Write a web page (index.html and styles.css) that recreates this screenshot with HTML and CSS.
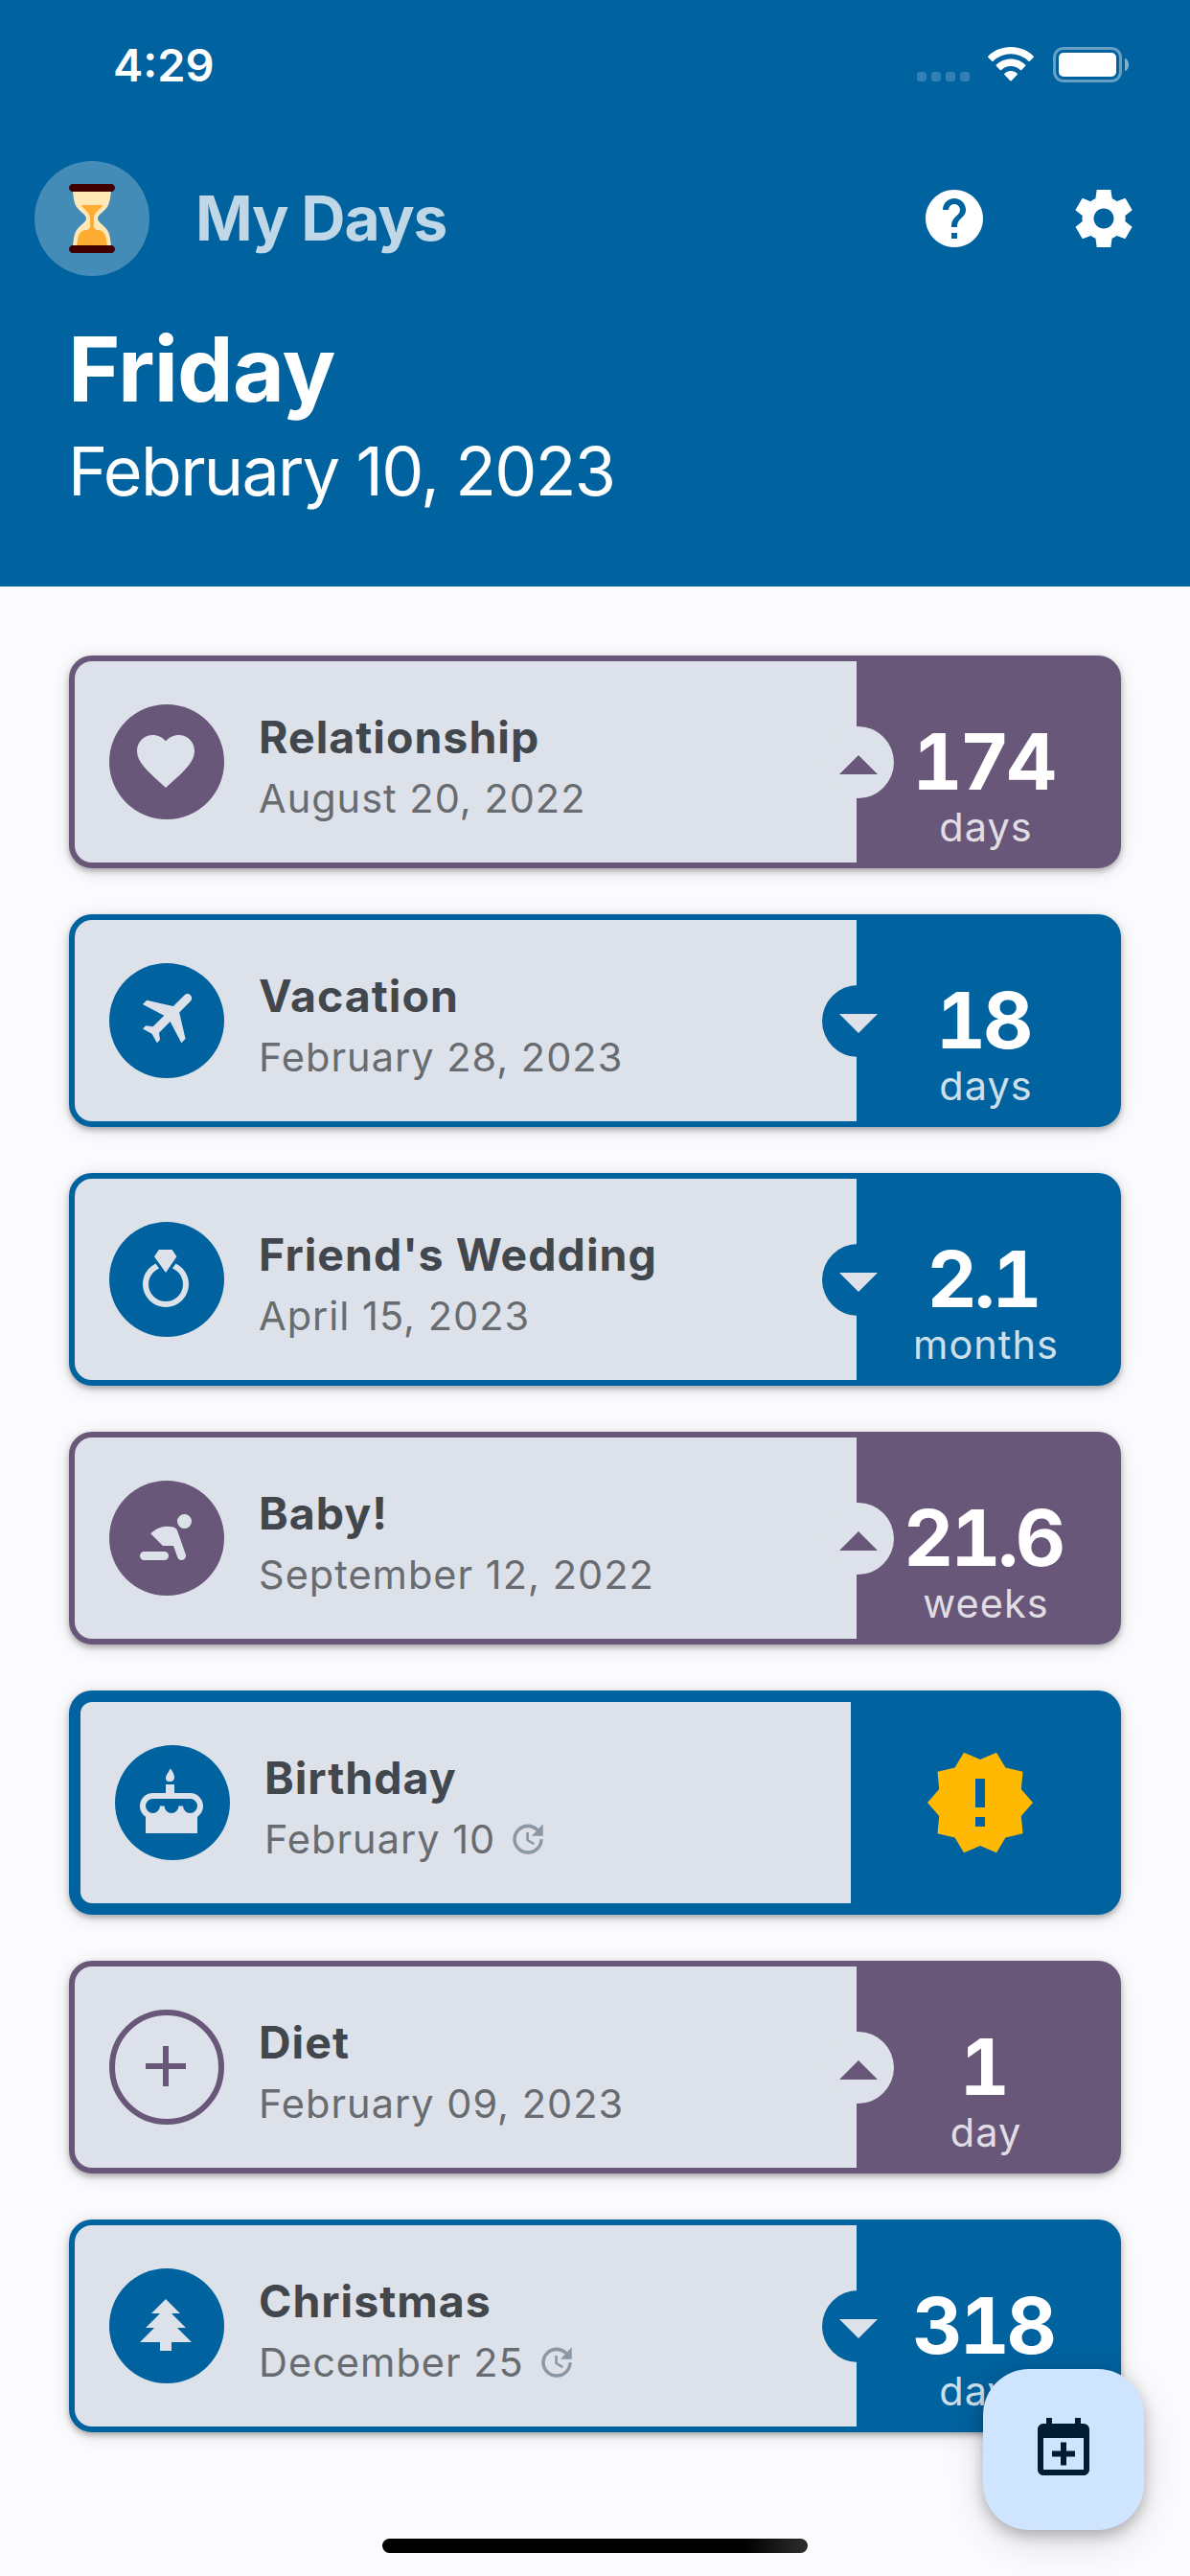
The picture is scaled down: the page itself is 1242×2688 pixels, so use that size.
FILE: index.html
```html
<!DOCTYPE html>
<html lang="en">
<head>
<meta charset="utf-8">
<title>My Days</title>
<link rel="stylesheet" href="styles.css">
</head>
<body>
<svg class="defs" aria-hidden="true">
  <symbol id="update" viewBox="0 0 24 24"><path d="M21,10.12H14.22L16.96,7.3C14.23,4.6 9.81,4.5 7.08,7.2C4.35,9.91 4.35,14.28 7.08,17C9.81,19.7 14.23,19.7 16.96,17C18.32,15.65 19,14.08 19,12.1H21C21,14.08 20.12,16.65 18.36,18.39C14.85,21.87 9.15,21.87 5.64,18.39C2.14,14.92 2.11,9.28 5.62,5.81C9.13,2.34 14.76,2.34 18.27,5.81L21,3V10.12M12.5,8V12.25L16,14.33L15.28,15.54L11,13V8H12.5Z"/></symbol>
  <symbol id="up" viewBox="0 0 40 20"><path d="M0 20L20 0L40 20Z"/></symbol>
  <symbol id="down" viewBox="0 0 40 20"><path d="M0 0H40L20 20Z"/></symbol>
</svg>
<div class="screen">
  <header class="header">
    <div class="status">
      <span class="time">4:29</span>
      <div class="status-icons">
        <div class="dots"><i></i><i></i><i></i><i></i></div>
        <svg class="wifi" viewBox="0 0 48 36"><path d="M24 0C33.2 0 41.600 3.500 47.600 9.400Q48.300 10.200 47.600 10.900L43.800 14.700Q43.100 15.300 42.400 14.700A26.500 26.500 0 0 0 5.600 14.700Q4.900 15.300 4.200 14.700L.4 10.900Q-.3 10.200 .4 9.400C6.400 3.500 14.800 0 24 0ZM24 12.500C29.900 12.500 35.200 14.800 39.100 18.600Q39.800 19.300 39.100 20L35.200 23.900Q34.500 24.500 33.800 23.900A14.200 14.200 0 0 0 14.200 23.900Q13.500 24.500 12.800 23.900L8.900 20Q8.200 19.300 8.900 18.600C12.800 14.800 18.100 12.500 24 12.500ZM24 25C26.500 25 28.800 26 30.600 27.700Q31.200 28.400 30.600 29.100L24.700 35.200Q24 35.900 23.300 35.200L17.400 29.100Q16.800 28.400 17.400 27.700C19.200 26 21.500 25 24 25Z"/></svg>
        <div class="battery"><div class="level"></div></div>
        <div class="nub"></div>
      </div>
    </div>
    <div class="appbar">
      <div class="avatar"><svg viewBox="0 0 36 36"><path fill="#FFE8B6" d="M21 18c0-2.001 3.246-3.369 5-6 2-3 2-10 2-10H8s0 7 2 10c1.754 2.631 5 3.999 5 6s-3.246 3.369-5 6c-2 3-2 10-2 10h20s0-7-2-10c-1.754-2.631-5-3.999-5-6z"/><path fill="#FFAC33" d="M20.999 24c-.999 0-2.057-1-2.057-2C19 20.287 19 19.154 19 18c0-3.22 3.034-4.561 4.9-7H12.1c1.865 2.439 4.9 3.78 4.9 7 0 1.155 0 2.289.058 4 0 1-1.058 2-2.058 2-2 0-3.595 1.784-4 3-1 3-1 7-1 7h16s0-4-1-7c-.405-1.216-2.001-3-4.001-3z"/><path fill="#3E0000" d="M30 34c0 1.104-.896 2-2 2H8c-1.104 0-2-.896-2-2s.896-2 2-2h20c1.104 0 2 .896 2 2zm0-32c0 1.104-.896 2-2 2H8c-1.104 0-2-.896-2-2s.896-2 2-2h20c1.104 0 2 .896 2 2z"/></svg></div>
      <h1 class="app-title">My Days</h1>
      <svg class="action" viewBox="0 0 24 24"><path d="M12 2C6.48 2 2 6.48 2 12s4.48 10 10 10 10-4.48 10-10S17.52 2 12 2zm1 17h-2v-2h2v2zm2.070-7.750l-.9.920C13.450 12.900 13 13.500 13 15h-2v-.5c0-1.100.450-2.100 1.170-2.830l1.240-1.260c.370-.360.590-.860.590-1.410 0-1.100-.9-2-2-2s-2 .9-2 2H8c0-2.210 1.790-4 4-4s4 1.790 4 4c0 .880-.360 1.680-.930 2.250z"/></svg>
      <svg class="action" viewBox="0 0 24 24"><path d="M19.440 12.990l.010-.020c.040-.320.080-.640.080-.980 0-.340-.030-.660-.070-.990l.010.020 2.440-1.920-2.430-4.220-2.870 1.160.010.010c-.520-.4-1.090-.740-1.710-1h.010L14.440 2H9.570l-.440 3.070h.010c-.620.260-1.190.6-1.710 1l.010-.010-2.880-1.170-2.440 4.220 2.440 1.920.010-.020c-.040.330-.070.650-.070.990 0 .340.030.660.080.980l.010.020-2.100 1.650-.330.260 2.430 4.200 2.880-1.150-.020-.040c.530.410 1.100.750 1.730 1.010h-.030L9.580 22h4.850s.030-.180.060-.420l.380-2.650h-.010c.620-.260 1.200-.6 1.730-1.010l-.020.040 2.880 1.150 2.430-4.200s-.140-.120-.330-.260l-2.110-1.660zM12 15.500c-1.930 0-3.500-1.570-3.500-3.500s1.570-3.500 3.500-3.500 3.500 1.570 3.500 3.500-1.570 3.500-3.500 3.500z"/></svg>
    </div>
    <div class="today">
      <div class="weekday">Friday</div>
      <div class="date-today">February 10, 2023</div>
    </div>
  </header>

  <main class="list">
    <article class="card past">
      <div class="info">
        <div class="icon"><svg viewBox="0 0 24 24"><path d="M12 21.350l-1.450-1.320C5.400 15.360 2 12.280 2 8.500 2 5.420 4.420 3 7.500 3c1.740 0 3.410.810 4.500 2.090C13.090 3.810 14.760 3 16.500 3 19.580 3 22 5.420 22 8.500c0 3.780-3.400 6.860-8.550 11.540L12 21.350z"/></svg></div>
        <div class="text"><h2 class="title">Relationship</h2><p class="date">August 20, 2022</p></div>
      </div>
      <div class="count"><div class="knob"><svg><use href="#up"/></svg></div><span class="number">174</span><span class="unit">days</span></div>
    </article>

    <article class="card future">
      <div class="info">
        <div class="icon"><svg viewBox="0 0 24 24"><path transform="translate(1.900 -1.100) rotate(45 12 12)" d="M21,16V14L13,9V3.500A1.500,1.500 0 0,0 11.500,2A1.500,1.500 0 0,0 10,3.500V9L2,14V16L10,13.500V19L8,20.500V22L11.500,21L15,22V20.500L13,19V13.500L21,16Z"/></svg></div>
        <div class="text"><h2 class="title">Vacation</h2><p class="date">February 28, 2023</p></div>
      </div>
      <div class="count"><div class="knob"><svg><use href="#down"/></svg></div><span class="number">18</span><span class="unit">days</span></div>
    </article>

    <article class="card future">
      <div class="info">
        <div class="icon"><svg viewBox="0 0 24 24"><path d="M12,10L8,4.400L9.600,2H14.200L15.800,4.400L12,10M15.500,6.800L14.300,8.500C16.500,9.400 18,11.500 18,14A6,6 0 0,1 12,20A6,6 0 0,1 6,14C6,11.500 7.600,9.400 9.700,8.500L8.500,6.800C5.800,8.100 4,10.800 4,14A8,8 0 0,0 12,22A8,8 0 0,0 20,14C20,10.800 18.200,8.100 15.500,6.800Z"/></svg></div>
        <div class="text"><h2 class="title">Friend's Wedding</h2><p class="date">April 15, 2023</p></div>
      </div>
      <div class="count"><div class="knob"><svg><use href="#down"/></svg></div><span class="number">2.1</span><span class="unit">months</span></div>
    </article>

    <article class="card past">
      <div class="info">
        <div class="icon"><svg viewBox="0 0 24 24"><path d="M18.500,4A2.500,2.500 0 0,1 21,6.500A2.500,2.500 0 0,1 18.500,9A2.500,2.500 0 0,1 16,6.500A2.500,2.500 0 0,1 18.500,4M4.500,20A1.500,1.500 0 0,1 3,18.500A1.500,1.500 0 0,1 4.500,17H11.500A1.500,1.500 0 0,1 13,18.500A1.500,1.500 0 0,1 11.500,20H4.500M16.090,19L14.690,15H11L6.750,10.750C6.750,10.750 9,8.250 12.500,8.250C15.500,8.250 15.850,9.250 16.060,9.870L18.920,18C19.200,18.780 18.780,19.640 18,19.920C17.220,20.190 16.360,19.780 16.090,19Z"/></svg></div>
        <div class="text"><h2 class="title">Baby!</h2><p class="date">September 12, 2022</p></div>
      </div>
      <div class="count"><div class="knob"><svg><use href="#up"/></svg></div><span class="number">21.6</span><span class="unit">weeks</span></div>
    </article>

    <article class="card future is-today">
      <div class="info">
        <div class="icon"><svg viewBox="0 0 24 24"><path d="M11.500,0.500C12,0.750 13,2.400 13,3.500C13,4.600 12.330,5 11.500,5C10.670,5 10,4.850 10,3.750C10,2.650 11,2 11.500,0.500M18.500,9C21,9 23,11 23,13.500C23,15.060 22.210,16.430 21,17.240V23H12L3,23V17.240C1.790,16.430 1,15.060 1,13.500C1,11 3,9 5.500,9H10V6H13V9H18.500M12,16A2.500,2.500 0 0,0 14.500,13.500H16A2.500,2.500 0 0,0 18.500,16A2.500,2.500 0 0,0 21,13.500A2.500,2.500 0 0,0 18.500,11H5.500A2.500,2.500 0 0,0 3,13.500A2.500,2.500 0 0,0 5.500,16A2.500,2.500 0 0,0 8,13.500H9.500A2.500,2.500 0 0,0 12,16Z"/></svg></div>
        <div class="text"><h2 class="title">Birthday</h2><p class="date">February 10<svg class="repeat"><use href="#update"/></svg></p></div>
      </div>
      <div class="count"><svg class="alert" viewBox="0 0 24 24"><path d="M23,12L20.560,9.220L20.900,5.540L17.290,4.720L15.400,1.540L12,3L8.600,1.540L6.710,4.720L3.100,5.530L3.440,9.210L1,12L3.440,14.780L3.100,18.470L6.710,19.290L8.600,22.470L12,21L15.400,22.460L17.290,19.280L20.900,18.460L20.560,14.780L23,12M13,17H11V15H13V17M13,13H11V7H13V13Z"/></svg></div>
    </article>

    <article class="card past">
      <div class="info">
        <div class="icon outlined"><svg viewBox="0 0 24 24"><path d="M19,13H13V19H11V13H5V11H11V5H13V11H19V13Z"/></svg></div>
        <div class="text"><h2 class="title">Diet</h2><p class="date">February 09, 2023</p></div>
      </div>
      <div class="count"><div class="knob"><svg><use href="#up"/></svg></div><span class="number">1</span><span class="unit">day</span></div>
    </article>

    <article class="card future">
      <div class="info">
        <div class="icon"><svg viewBox="0 0 24 24"><path d="M10,21V18H3L8,13H5L10,8H7L12,3L17,8H14L19,13H16L21,18H14V21H10Z"/></svg></div>
        <div class="text"><h2 class="title">Christmas</h2><p class="date">December 25<svg class="repeat"><use href="#update"/></svg></p></div>
      </div>
      <div class="count"><div class="knob"><svg><use href="#down"/></svg></div><span class="number">318</span><span class="unit">days</span></div>
    </article>
  </main>

  <button class="fab" aria-label="Add event"><svg viewBox="0 0 24 24"><path d="M19 19V8H5V19H19M16 1H18V3H19A2 2 0 0 1 21 5V19C21 20.110 20.110 21 19 21H5C3.890 21 3 20.100 3 19V5C3 3.890 3.890 3 5 3H6V1H8V3H16V1M11 9.500H13V12.500H16V14.500H13V17.500H11V14.500H8V12.500H11V9.500Z"/></svg></button>
  <div class="home-indicator"></div>
</div>
</body>
</html>
```
FILE: styles.css
```css
:root {
  --blue: #00629f;
  --purple: #695779;
  --surface: #dde2ea;
  --bg: #fcfcff;
}
* { box-sizing: border-box; }
body {
  margin: 0;
  background: var(--bg);
  font-family: Inter, "Liberation Sans", sans-serif;
}
h1, h2, p { margin: 0; }
svg { display: block; flex: none; }
.defs { width: 0; height: 0; position: absolute; }
.screen {
  position: relative;
  width: 1242px;
  height: 2688px;
  overflow: hidden;
}

/* Header */
.header { height: 612px; background: var(--blue); color: #fff; }
.status {
  height: 144px;
  padding: 44px 64px 0 118px;
  display: flex;
  justify-content: space-between;
  align-items: flex-start;
}
.time { font-size: 47px; line-height: 48px; font-weight: 600; }
.status-icons { display: flex; align-items: flex-start; padding-top: 5px; }
.dots { display: flex; gap: 5px; padding-top: 26px; margin-right: 19px; }
.dots i { width: 10px; height: 10px; border-radius: 3px; background: rgba(255,255,255,.2); }
.wifi { width: 48px; height: 36px; fill: #fff; margin-right: 20px; }
.battery {
  width: 72px;
  height: 37px;
  padding: 3px;
  border: 3px solid rgba(255,255,255,.4);
  border-radius: 11px;
}
.level { height: 25px; border-radius: 5px; background: #fff; }
.nub {
  width: 4px;
  height: 13px;
  margin: 12px 0 0 3px;
  border-radius: 0 4px 4px 0 / 0 6.500px 6.500px 0;
  background: rgba(255,255,255,.5);
}
.appbar {
  height: 168px;
  padding: 0 54px 0 36px;
  display: flex;
  align-items: center;
}
.avatar {
  width: 120px;
  height: 120px;
  border-radius: 50%;
  background: #448cb8;
  display: flex;
  align-items: center;
  justify-content: center;
}
.avatar svg { width: 72px; height: 72px; }
.app-title {
  flex: 1;
  margin-left: 48px;
  font-size: 64px;
  line-height: 76px;
  font-weight: 700;
  letter-spacing: -1.2px;
  color: #bfd7e7;
}
.action { width: 72px; height: 72px; fill: #fff; margin-left: 84px; }
.today { padding: 17px 71px 0; }
.weekday { font-size: 93px; line-height: 112px; font-weight: 700; letter-spacing: -0.8px; }
.date-today { margin-top: 9px; font-size: 70px; line-height: 84px; letter-spacing: -1.7px; }

/* Cards */
.list { display: flex; flex-direction: column; gap: 48px; padding: 72px; }
.card {
  --tone: var(--blue);
  --knob: var(--blue);
  --arrow: var(--surface);
  display: flex;
  border: 6px solid var(--tone);
  border-radius: 24px;
  background: var(--tone);
  box-shadow: 0 3px 6px rgba(0,0,0,.3), 0 3px 24px rgba(0,0,0,.1);
}
.past {
  --tone: var(--purple);
  --knob: var(--surface);
  --arrow: var(--purple);
}
.is-today { border-width: 12px; }
.info {
  flex: 1;
  height: 210px;
  padding-left: 36px;
  display: flex;
  align-items: center;
  gap: 36px;
  border-radius: 18px 0 0 18px;
  background: var(--surface);
}
.is-today .info { border-radius: 12px 0 0 12px; }
.icon {
  width: 120px;
  height: 120px;
  padding: 0 2px 2px 0;
  border-radius: 50%;
  background: var(--tone);
  fill: var(--surface);
  display: flex;
  align-items: center;
  justify-content: center;
}
.icon svg { width: 72px; height: 72px; }
.outlined { border: 6px solid var(--tone); background: none; fill: var(--tone); }
.text { padding-top: 9px; }
.title {
  font-size: 46.500px;
  line-height: 56px;
  font-weight: 700;
  letter-spacing: 1px;
  color: #42474e;
}
.date {
  margin-top: 11px;
  font-size: 41.500px;
  line-height: 50px;
  letter-spacing: 1px;
  color: #686c70;
  display: flex;
  align-items: center;
}
.repeat { width: 42px; height: 42px; margin-left: 13px; fill: #8b97a4; }
.count {
  position: relative;
  width: 270px;
  padding-top: 63px;
  display: flex;
  flex-direction: column;
  align-items: center;
  color: #fff;
}
.is-today .count { padding-top: 0; justify-content: center; }
.alert { width: 120px; height: 120px; fill: #ffb902; }
.number {
  margin-right: 6px;
  font-size: 81px;
  line-height: 84px;
  font-weight: 700;
  font-variant-numeric: tabular-nums;
  letter-spacing: -3.2px;
}
.unit { margin-top: 1px; font-size: 41.500px; line-height: 50px; letter-spacing: 1px; opacity: .8; }
.knob {
  position: absolute;
  left: -36px;
  top: 68px;
  width: 75px;
  height: 75px;
  padding-top: 5px;
  border-radius: 50%;
  background: var(--knob);
  fill: var(--arrow);
  display: flex;
  align-items: center;
  justify-content: center;
}
.knob svg { width: 40px; height: 20px; }

/* Overlays */
.fab {
  position: absolute;
  right: 48px;
  bottom: 48px;
  width: 168px;
  height: 168px;
  padding: 0;
  border: 0;
  border-radius: 48px;
  background: #cfe4ff;
  fill: #001d34;
  display: flex;
  align-items: center;
  justify-content: center;
  box-shadow: 0 6px 15px rgba(0,0,0,.25), 0 12px 48px rgba(0,0,0,.13);
}
.fab svg { width: 72px; height: 72px; }
.home-indicator {
  position: absolute;
  left: 399px;
  bottom: 24px;
  width: 444px;
  height: 15px;
  border-radius: 8px;
  background: linear-gradient(90deg, #000 85%, #2e2e2e);
}
```
